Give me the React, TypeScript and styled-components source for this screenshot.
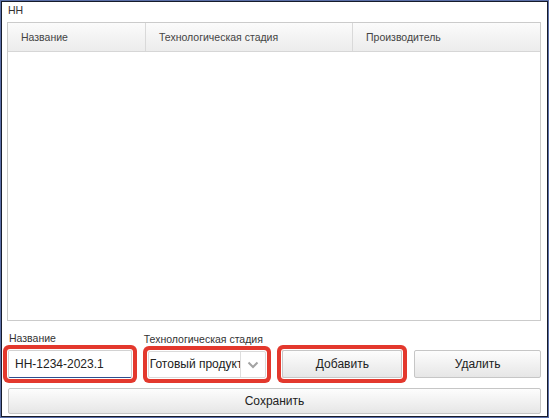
import React, { FC } from "react";
import styled, { createGlobalStyle, css } from "styled-components";

const GlobalStyle = createGlobalStyle`
  html, body {
    margin: 0;
    padding: 0;
    background: #fff;
  }
  body {
    font-family: "Liberation Sans", Arial, sans-serif;
  }
`;

interface Column {
  title: string;
  width?: number;
}

const columns: Column[] = [
  { title: "Название", width: 137 },
  { title: "Технологическая стадия", width: 207 },
  { title: "Производитель" }
];

const App: FC = () => {
  return (
    <>
      <GlobalStyle />
      <Frame>
        <Window>
          <Title>НН</Title>
          <Table>
            <HeadRow>
              {columns.map(col => (
                <HeadCell key={col.title} $width={col.width}>
                  {col.title}
                </HeadCell>
              ))}
            </HeadRow>
            <Body />
          </Table>
          <Controls>
            <Field $width={130}>
              <Label>Название</Label>
              <Input $highlight type="text" defaultValue="НН-1234-2023.1" />
            </Field>
            <Field $width={128}>
              <Label>Технологическая стадия</Label>
              <Select $highlight>
                <SelectText>Готовый продукт</SelectText>
                <SelectArrow>
                  <svg width="12" height="8" viewBox="0 0 12 8">
                    <path d="M1.5 1.5 L6 6 L10.5 1.5" fill="none" stroke="#a3a3a3" strokeWidth="2" />
                  </svg>
                </SelectArrow>
              </Select>
            </Field>
            <Button $highlight $width={120}>Добавить</Button>
            <Button $width={127}>Удалить</Button>
          </Controls>
          <SaveButton>Сохранить</SaveButton>
        </Window>
      </Frame>
    </>
  );
};

const ring = css`
  box-shadow: 0 0 0 1px #fff, 0 0 0 5px #e3382d;
`;

const Frame = styled.div`
  width: 549px;
  height: 418px;
  box-sizing: border-box;
  border: 1px solid #5b6fa8;
`;

const Window = styled.div`
  height: 100%;
  box-sizing: border-box;
  border: 1px solid #161b2b;
  padding: 0 6px 2px 5px;
  display: flex;
  flex-direction: column;
  background: #fff;
`;

const Title = styled.div`
  height: 16px;
  line-height: 16px;
  font-size: 10.5px;
  color: #333;
  margin-bottom: 4px;
  padding-left: 1px;
`;

const Table = styled.div`
  flex: 1;
  display: flex;
  flex-direction: column;
  border: 1px solid #cbcbcb;
`;

const HeadRow = styled.div`
  display: flex;
  height: 28px;
  border-bottom: 1px solid #d6d6d6;
  background: linear-gradient(#fbfbfb, #ececec);
`;

const HeadCell = styled.div<{ $width?: number }>`
  ${p => (p.$width ? `width: ${p.$width}px;` : "flex: 1;")}
  box-sizing: border-box;
  padding-left: 13px;
  display: flex;
  align-items: center;
  font-size: 10.5px;
  color: #444;
  & + & {
    border-left: 1px solid #d9d9d9;
  }
`;

const Body = styled.div`
  flex: 1;
  background: #fff;
`;

const Controls = styled.div`
  display: flex;
  align-items: flex-end;
  margin-top: 10px;
  padding-left: 1px;
  gap: 12px;
`;

const Field = styled.div<{ $width: number }>`
  width: ${p => p.$width}px;
  display: flex;
  flex-direction: column;
  & + & {
    margin-left: -7px;
  }
`;

const Label = styled.div`
  height: 14px;
  line-height: 14px;
  font-size: 10.5px;
  color: #333;
  margin-bottom: 5px;
  padding-left: 1px;
`;

const Input = styled.input<{ $highlight?: boolean }>`
  width: 124px;
  height: 28px;
  box-sizing: border-box;
  margin: 0;
  padding: 0 6px;
  border: 1px solid #d2d2d2;
  border-bottom-color: #2f4f8f;
  border-radius: 2px;
  outline: none;
  font-family: "Liberation Sans", Arial, sans-serif;
  font-size: 12px;
  color: #222;
  ${p => p.$highlight && ring}
`;

const Select = styled.div<{ $highlight?: boolean }>`
  width: 118px;
  height: 27px;
  margin-left: 5px;
  box-sizing: border-box;
  display: flex;
  border: 1px solid #dadada;
  border-radius: 2px;
  background: #fff;
  ${p => p.$highlight && ring}
`;

const SelectText = styled.div`
  flex: 1;
  overflow: hidden;
  white-space: nowrap;
  padding-left: 1px;
  line-height: 25px;
  font-size: 12px;
  color: #222;
`;

const SelectArrow = styled.div`
  width: 24px;
  display: flex;
  align-items: center;
  justify-content: center;
  border-left: 1px solid #dedede;
`;

const Button = styled.button<{ $width: number; $highlight?: boolean }>`
  width: ${p => p.$width}px;
  height: 28px;
  margin: 0;
  padding: 0;
  border: 1px solid #c6c6c6;
  border-radius: 2px;
  background: linear-gradient(#fdfdfd, #e6e6e6);
  font-family: "Liberation Sans", Arial, sans-serif;
  font-size: 12px;
  color: #222;
  ${p => p.$highlight && ring}
`;

const SaveButton = styled.button`
  margin: 10px 0 0 1px;
  height: 26px;
  padding: 0;
  border: 1px solid #c6c6c6;
  border-radius: 2px;
  background: linear-gradient(#fdfdfd, #e6e6e6);
  font-family: "Liberation Sans", Arial, sans-serif;
  font-size: 12px;
  color: #222;
`;

export default App;
